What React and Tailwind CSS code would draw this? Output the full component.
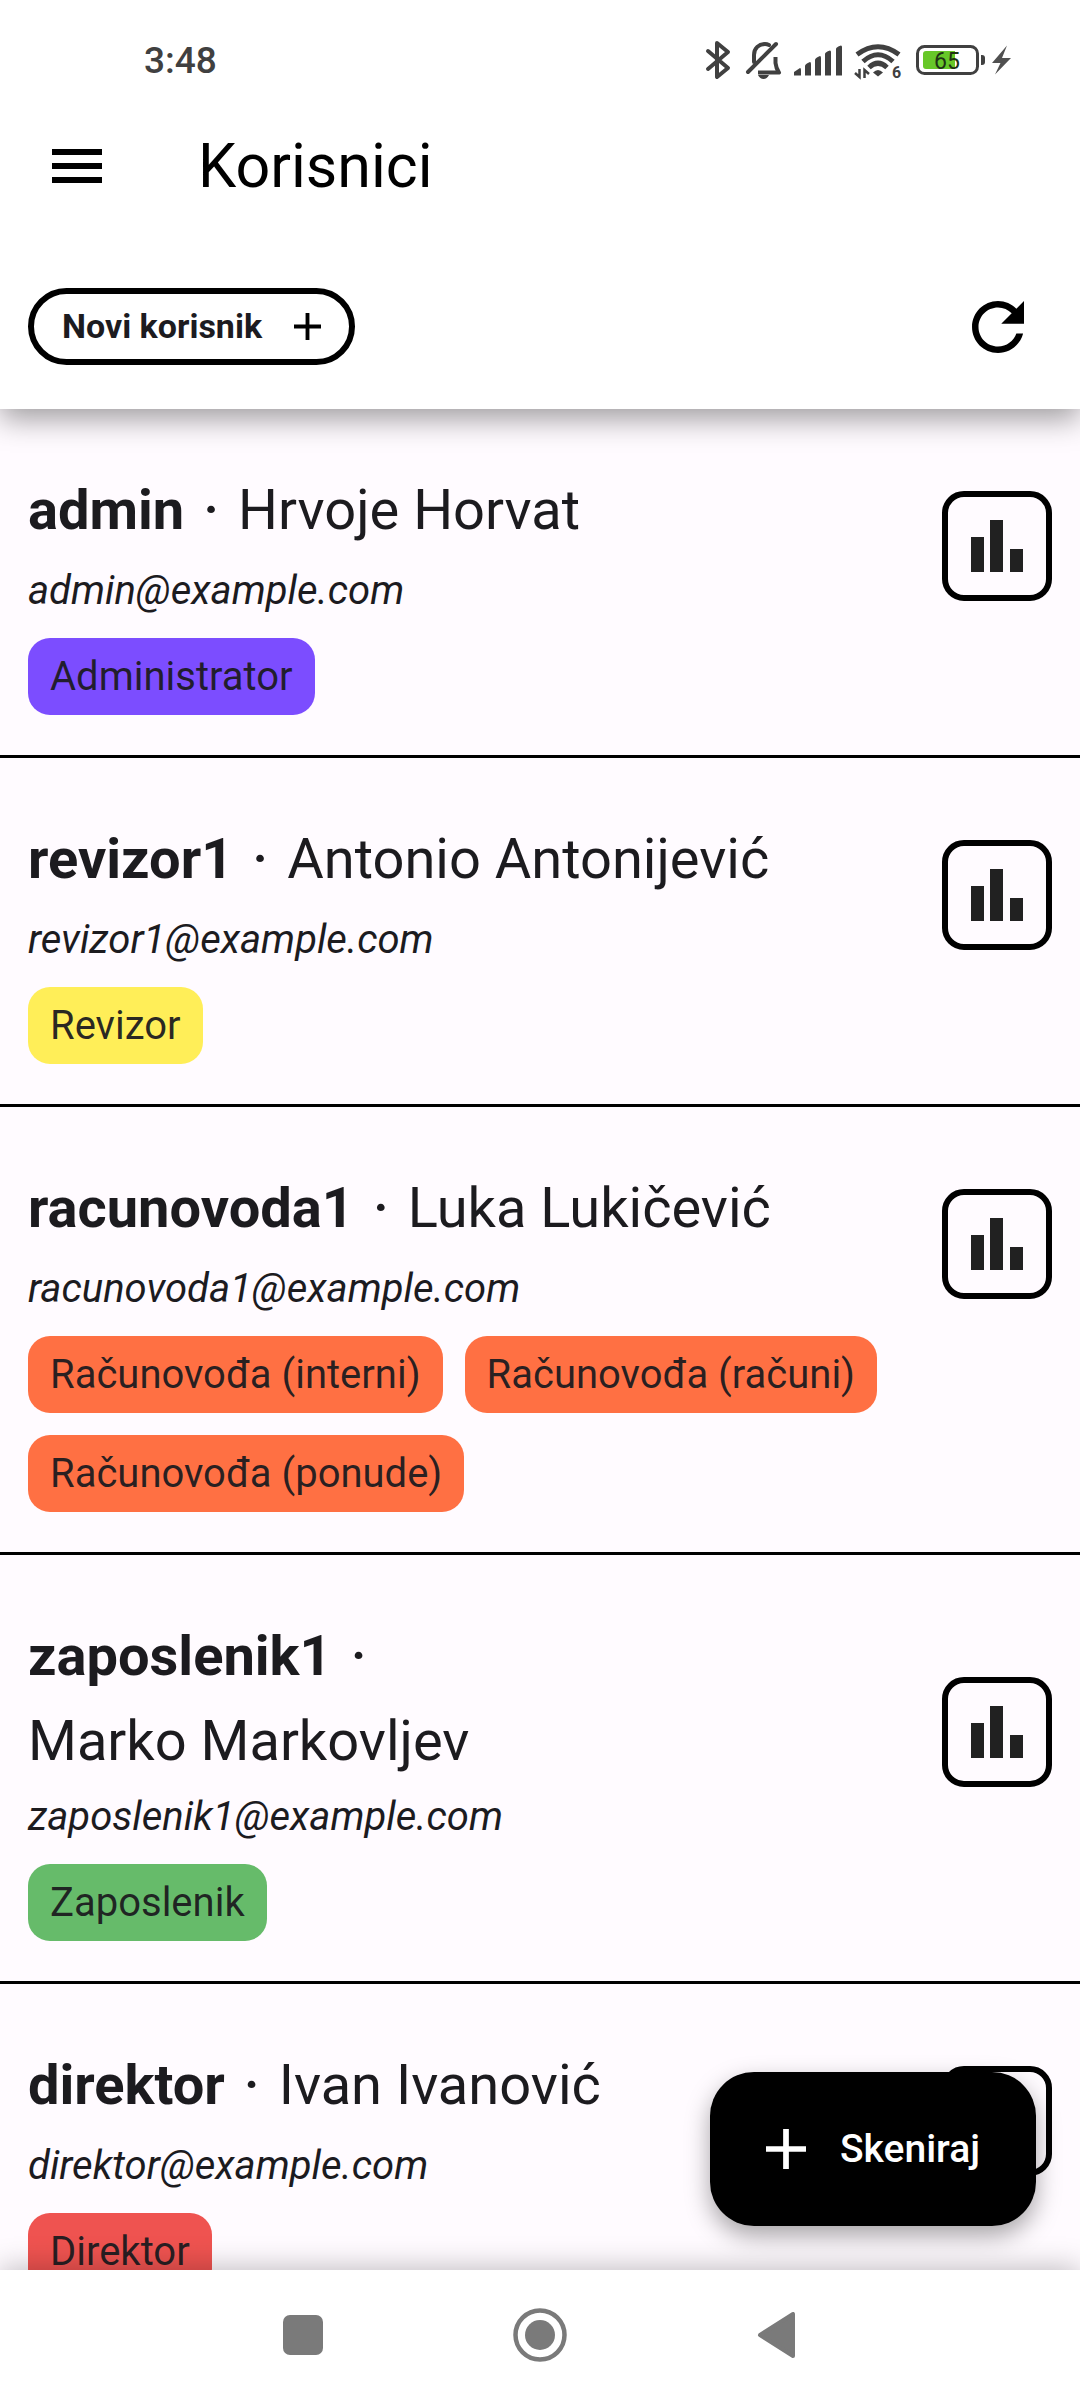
import React from "react";

const users = [
  { login: "admin", name: "Hrvoje Horvat", email: "admin@example.com", color: "bg-[#7c4dff]", roles: ["Administrator"] },
  { login: "revizor1", name: "Antonio Antonijević", email: "revizor1@example.com", color: "bg-[#ffee58]", roles: ["Revizor"] },
  { login: "racunovoda1", name: "Luka Lukičević", email: "racunovoda1@example.com", color: "bg-[#ff7043]", roles: ["Računovođa (interni)", "Računovođa (računi)", "Računovođa (ponude)"] },
  { login: "zaposlenik1", name: "Marko Markovljev", email: "zaposlenik1@example.com", color: "bg-[#66bb6a]", roles: ["Zaposlenik"], stacked: true },
  { login: "direktor", name: "Ivan Ivanović", email: "direktor@example.com", color: "bg-[#ef5350]", roles: ["Direktor"] },
];

function StatusBar() {
  return (
    <div className="flex h-[120px] items-center justify-between pr-[68px] pl-36 text-[#404040]">
      <time className="text-[37px] leading-none font-medium">3:48</time>
      <svg width="308" height="48" viewBox="0 -4 308 48" fill="none" aria-hidden="true">
        <path d="M4 11 L24 28 L13 37 V3 L24 12 L4 29" stroke="#404040" strokeWidth="4" strokeLinecap="round" strokeLinejoin="round" />
        <g stroke="#404040" strokeWidth="4" strokeLinecap="round" strokeLinejoin="round">
          <path d="M44 32 L72 4" />
          <path d="M50 22 V15 C50 8 55 4 61 4 Q63 4 65 5" />
          <path d="M71.500 17 V23 Q72 28 75 32.500 H54" strokeLinecap="butt" />
        </g>
        <path d="M54 35 H65 Q63 39 59.500 39 T54 35Z" fill="#404040" />
        <g fill="#404040">
          <path d="M90 35.500 V32 L96 28 Q97 28 97 30 V35.500Z" />
          <path d="M101 35.500 V26 Q101 24 106 22 Q107 22 107 24 V35.500Z" />
          <path d="M111 35.500 V20 Q111 18 116 16 Q117 16 117 18 V35.500Z" />
          <path d="M121 35.500 V14 Q121 12 126 10.500 Q127 10.500 127 12 V35.500Z" />
          <path d="M132 35.500 V9 Q132 7 137 5.500 Q138 5.500 138 7 V35.500Z" />
        </g>
        <g stroke="#404040" strokeWidth="5">
          <path d="M153 14.500 Q174 -1 195 14.500" />
          <path d="M159 21.500 Q174 8 189 21.500" />
          <path d="M165 27.500 Q174 19 183 27.500" />
        </g>
        <path d="M174 36.500 L169 32.500 Q174 27.500 179 32.500Z" fill="#404040" />
        <path d="M151 33 L155.500 37 V29 M160.500 38 V30 L165 34" stroke="#404040" strokeWidth="2.500" />
        <text x="188" y="38" fontSize="16" fontWeight="700" fill="#404040">6</text>
        <rect x="213.500" y="6.500" width="60" height="27" rx="7" stroke="#404040" strokeWidth="3" />
        <path d="M222 11 H251 V29 H222 Q219 29 219 26 V14 Q219 11 222 11Z" fill="#67c728" />
        <path d="M277 15 H278 Q281 15 281 18 V22 Q281 25 278 25 H277Z" fill="#404040" />
        <text x="230" y="29" fontSize="23" fill="#1f3314">65</text>
        <path d="M303 5.500 L288 23 H296.500 L291 34.500 L307 18 H298Z" fill="#505050" />
      </svg>
    </div>
  );
}

function Plus({ className }) {
  return (
    <svg viewBox="0 0 14 14" className={className} fill="currentColor" aria-hidden="true">
      <path d="M14 8H8v6H6V8H0V6h6V0h2v6h6z" />
    </svg>
  );
}

function UserRow({ user }) {
  return (
    <li className="shrink-0 border-b-3 border-black px-7 pt-14 pb-10">
      <div className="flex items-center justify-between">
        <div className="min-w-0">
          <h2 className="flex flex-wrap gap-x-[19px] text-[56px] leading-[90px]">
            <span className="flex gap-[19px]">
              <b>{user.login}</b>
              <span className="font-medium">·</span>
            </span>
            <span className={user.stacked ? "basis-full leading-[80px]" : ""}>{user.name}</span>
          </h2>
          <p className="text-[40px] leading-[71px] italic">{user.email}</p>
        </div>
        <button
          type="button"
          aria-label={`Statistika: ${user.login}`}
          className="flex size-[110px] shrink-0 items-center justify-center rounded-[22px] border-6 border-black"
        >
          <svg viewBox="0 0 52 52" className="size-[52px] text-[#212121]" fill="currentColor" aria-hidden="true">
            <path d="M0 17h13v35H0zM19 0h13v52H19zM39 29h13v23H39z" />
          </svg>
        </button>
      </div>
      <ul className="mt-3 flex flex-wrap gap-[22px]">
        {user.roles.map((role) => (
          <li key={role} className={`rounded-[22px] px-[22px] text-[40px] leading-[77px] ${user.color} text-[#1c1b1f]/95`}>
            {role}
          </li>
        ))}
      </ul>
    </li>
  );
}

export default function App() {
  return (
    <div className="flex h-screen flex-col overflow-hidden bg-[#fffbff] font-[Roboto,sans-serif] text-[#1c1b1f]">
      <header className="relative z-10 shrink-0 bg-white shadow-[0_10px_28px_rgba(0,0,0,0.38)]">
        <StatusBar />
        <div className="flex h-[92px] items-center gap-24 px-[52px] text-black">
          <button type="button" aria-label="Izbornik" className="flex w-[50px] flex-col gap-2">
            <span className="h-[6px] bg-black" />
            <span className="h-[6px] bg-black" />
            <span className="h-[6px] bg-black" />
          </button>
          <h1 className="text-[61px] leading-none">Korisnici</h1>
        </div>
        <div className="flex items-center justify-between pt-[76px] pr-[56px] pb-11 pl-7">
          <button type="button" className="flex h-[77px] items-center gap-8 rounded-full border-6 border-black px-7 text-[34px] font-bold">
            Novi korisnik
            <Plus className="size-[27px] text-black" />
          </button>
          <button type="button" aria-label="Osvježi" className="text-black">
            <svg viewBox="4 4 16 16" className="size-[52px]" fill="currentColor" aria-hidden="true">
              <path d="M17.650 6.350C16.200 4.900 14.210 4 12 4c-4.420 0-7.990 3.580-7.990 8s3.570 8 7.990 8c3.730 0 6.840-2.550 7.730-6h-2.080c-.820 2.330-3.040 4-5.650 4-3.310 0-6-2.690-6-6s2.690-6 6-6c1.660 0 3.140.690 4.220 1.780L13 11h7V4l-2.350 2.350z" />
            </svg>
          </button>
        </div>
      </header>

      <main className="relative min-h-0 flex-1 overflow-hidden">
        <ul className="flex flex-col">
          {users.map((user) => (
            <UserRow key={user.login} user={user} />
          ))}
        </ul>
        <button
          type="button"
          className="absolute right-11 bottom-11 flex h-[154px] items-center gap-[34px] rounded-[44px] bg-black px-14 text-[39px] font-medium text-white shadow-[0_10px_24px_rgba(0,0,0,0.35)]"
        >
          <Plus className="size-[40px]" />
          Skeniraj
        </button>
      </main>

      <nav className="relative z-10 flex h-[130px] shrink-0 items-center justify-center gap-[190px] bg-white text-[#7a7a7a] shadow-[0_-2px_28px_rgba(0,0,0,0.26)]">
        <button type="button" aria-label="Nedavne aplikacije">
          <svg viewBox="0 0 40 40" className="size-[40px]" fill="currentColor" aria-hidden="true">
            <rect width="40" height="40" rx="7" />
          </svg>
        </button>
        <button type="button" aria-label="Početni zaslon">
          <svg viewBox="0 0 54 54" className="size-[54px]" fill="none" aria-hidden="true">
            <circle cx="27" cy="27" r="24.500" stroke="currentColor" strokeWidth="4.500" />
            <circle cx="27" cy="27" r="15" fill="currentColor" />
          </svg>
        </button>
        <button type="button" aria-label="Natrag">
          <svg viewBox="0 0 40 46" className="h-[46px] w-[40px]" fill="currentColor" stroke="currentColor" strokeWidth="4" strokeLinejoin="round" aria-hidden="true">
            <path d="M36 2v42L3 23z" />
          </svg>
        </button>
      </nav>
    </div>
  );
}
